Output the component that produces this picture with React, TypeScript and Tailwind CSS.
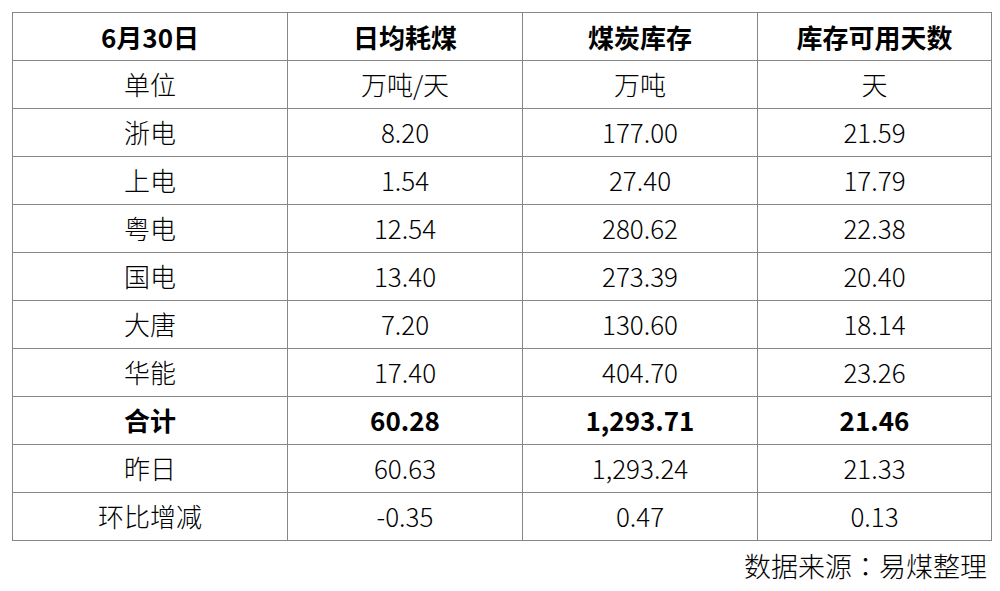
import React from "react"

interface Row {
  name: string
  daily: string
  stock: string
  days: string
  bold?: boolean
}

const rows: Row[] = [
  { name: "单位", daily: "万吨/天", stock: "万吨", days: "天" },
  { name: "浙电", daily: "8.20", stock: "177.00", days: "21.59" },
  { name: "上电", daily: "1.54", stock: "27.40", days: "17.79" },
  { name: "粤电", daily: "12.54", stock: "280.62", days: "22.38" },
  { name: "国电", daily: "13.40", stock: "273.39", days: "20.40" },
  { name: "大唐", daily: "7.20", stock: "130.60", days: "18.14" },
  { name: "华能", daily: "17.40", stock: "404.70", days: "23.26" },
  { name: "合计", daily: "60.28", stock: "1,293.71", days: "21.46", bold: true },
  { name: "昨日", daily: "60.63", stock: "1,293.24", days: "21.33" },
  { name: "环比增减", daily: "-0.35", stock: "0.47", days: "0.13" },
]

const headers = ["6月30日", "日均耗煤", "煤炭库存", "库存可用天数"]

export default function App() {
  return (
    <div
      className="w-[1000px] h-[591px] bg-white pl-3 pt-3 text-black"
      style={{ fontFamily: '"Noto Sans CJK SC", "Noto Sans", sans-serif' }}
    >
      <table className="border-collapse text-[26px] leading-none">
        <colgroup>
          <col className="w-[275px]" />
          <col className="w-[235px]" />
          <col className="w-[235px]" />
          <col className="w-[234px]" />
        </colgroup>
        <thead>
          <tr className="h-[48px]">
            {headers.map((h) => (
              <th
                key={h}
                className="border border-[#878787] font-bold text-center p-0"
              >
                {h}
              </th>
            ))}
          </tr>
        </thead>
        <tbody>
          {rows.map((r) => (
            <tr key={r.name} className="h-[48px]">
              {[r.name, r.daily, r.stock, r.days].map((v, i) => (
                <td
                  key={i}
                  className={
                    "border border-[#878787] text-center p-0 pb-[2px] " +
                    (r.bold ? "font-bold" : "font-light")
                  }
                >
                  {v}
                </td>
              ))}
            </tr>
          ))}
        </tbody>
      </table>
      {/* source note under the table */}
      <div className="w-[975px] text-right text-[27px] font-light leading-none mt-[11px]">
        数据来源
        <span
          className="inline-block w-[1em] text-center"
          style={{ fontFamily: '"Noto Sans CJK JP", sans-serif' }}
        >
          ：
        </span>
        易煤整理
      </div>
    </div>
  )
}
